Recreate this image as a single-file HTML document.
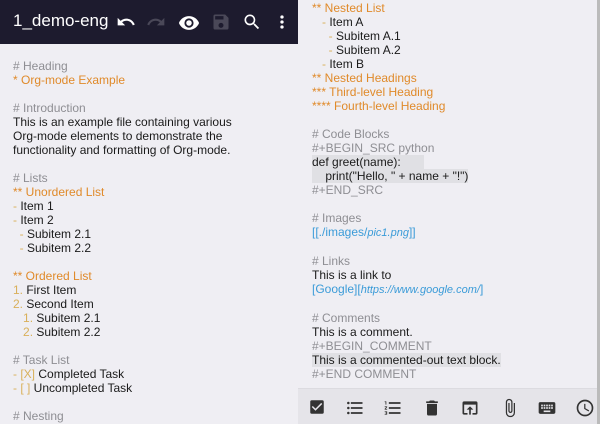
<!DOCTYPE html>
<html><head><meta charset="utf-8"><style>
*{margin:0;padding:0;box-sizing:border-box}
body{width:600px;height:424px;overflow:hidden;background:#efeef3;font-family:"Liberation Sans",sans-serif;font-size:12px;color:#1a1a1a;position:relative}
.bar{position:absolute;left:0;top:0;width:298px;height:44px;background:#1d1b2e}
.title{position:absolute;left:13px;top:11px;color:#fff;font-size:17px}
.ic{position:absolute;top:12px}
.pane{position:absolute;line-height:14px;white-space:pre}
.g{color:#8e8e93}.o{color:#e08a2a}.b{color:#3a9bd8}.y{color:#d9b05a}
.hl{background:#e0e0e4}
.tb{position:absolute;left:298px;top:388px;width:299px;height:36px;background:#e5e4e9;border-top:1px solid #dcdbe0}
.edge{position:absolute;left:597px;top:0;width:3px;height:424px;background:#bbb}
.tb svg{position:absolute;top:9px}
</style></head><body>
<div class="bar">
<div class="title">1_demo-eng</div>
<svg class="ic" style="left:116px" width="20" height="20" viewBox="0 0 24 24"><path fill="#fff" d="M12.5 8c-2.65 0-5.05 1-6.9 2.6L2 7v9h9l-3.62-3.62C8.77 11.2 10.54 10.5 12.5 10.5c3.54 0 6.55 2.31 7.6 5.5l2.37-.78C21.08 11.03 17.15 8 12.5 8z"/></svg>
<svg class="ic" style="left:146px" width="20" height="20" viewBox="0 0 24 24"><path fill="#4a4858" d="M18.4 10.6C16.55 9 14.15 8 11.5 8c-4.65 0-8.58 3.03-9.96 7.22L3.9 16c1.05-3.19 4.05-5.5 7.6-5.5 1.95 0 3.73.72 5.12 1.88L13 16h9V7l-3.6 3.6z"/></svg>
<svg class="ic" style="left:178px" width="22" height="22" viewBox="0 0 24 24"><path fill="#fff" d="M12 4.5C7 4.5 2.73 7.61 1 12c1.73 4.39 6 7.5 11 7.5s9.27-3.11 11-7.5c-1.73-4.39-6-7.5-11-7.5zM12 17a5 5 0 1 1 0-10 5 5 0 0 1 0 10zm0-8a3 3 0 1 0 0 6 3 3 0 0 0 0-6z"/></svg>
<svg class="ic" style="left:211px" width="20" height="20" viewBox="0 0 24 24"><path fill="#4a4858" d="M17 3H5a2 2 0 0 0-2 2v14a2 2 0 0 0 2 2h14a2 2 0 0 0 2-2V7l-4-4zm-5 16a3 3 0 1 1 0-6 3 3 0 0 1 0 6zm3-10H5V5h10v4z"/></svg>
<svg class="ic" style="left:242px" width="20" height="20" viewBox="0 0 24 24"><path fill="#fff" d="M15.5 14h-.79l-.28-.27A6.47 6.47 0 0 0 16 9.5 6.5 6.5 0 1 0 9.5 16c1.61 0 3.09-.59 4.23-1.57l.27.28v.79l5 4.99L20.49 19l-4.99-5zm-6 0C7.01 14 5 11.99 5 9.5S7.01 5 9.5 5 14 7.01 14 9.5 11.99 14 9.5 14z"/></svg>
<svg class="ic" style="left:272px" width="20" height="20" viewBox="0 0 24 24"><path fill="#fff" d="M12 8a2 2 0 1 0 0-4 2 2 0 0 0 0 4zm0 2a2 2 0 1 0 0 4 2 2 0 0 0 0-4zm0 6a2 2 0 1 0 0 4 2 2 0 0 0 0-4z"/></svg>
</div>
<div class="pane" style="left:13px;top:59px"><span class="g"># Heading</span>
<span class="o">* Org-mode Example</span>

<span class="g"># Introduction</span>
This is an example file containing various
Org-mode elements to demonstrate the
functionality and formatting of Org-mode.

<span class="g"># Lists</span>
<span class="o">** Unordered List</span>
<span class="y">-</span> Item 1
<span class="y">-</span> Item 2
  <span class="y">-</span> Subitem 2.1
  <span class="y">-</span> Subitem 2.2

<span class="o">** Ordered List</span>
<span class="y">1.</span> First Item
<span class="y">2.</span> Second Item
   <span class="y">1.</span> Subitem 2.1
   <span class="y">2.</span> Subitem 2.2

<span class="g"># Task List</span>
<span class="y">- [X]</span> Completed Task
<span class="y">- [ ]</span> Uncompleted Task

<span class="g"># Nesting</span></div>
<div class="pane" style="left:312px;top:1px"><span class="o">** Nested List</span>
   <span class="y">-</span> Item A
     <span class="y">-</span> Subitem A.1
     <span class="y">-</span> Subitem A.2
   <span class="y">-</span> Item B
<span class="o">** Nested Headings</span>
<span class="o">*** Third-level Heading</span>
<span class="o">**** Fourth-level Heading</span>

<span class="g"># Code Blocks</span>
<span class="g">#+BEGIN_SRC python</span>
<span class="hl">def greet(name):       </span>
<span class="hl">    print("Hello, " + name + "!")</span>
<span class="g">#+END_SRC</span>

<span class="g"># Images</span>
<span class="b">[[./images/<i style="font-size:11px">pic1.png</i>]]</span>

<span class="g"># Links</span>
This is a link to
<span class="b">[Google][<i style="font-size:11px">https://www.google.com/</i>]</span>

<span class="g"># Comments</span>
This is a comment.
<span class="g">#+BEGIN_COMMENT</span>
<span class="hl">This is a commented-out text block.</span>
<span class="g">#+END COMMENT</span></div>
<div class="tb">
<svg style="left:10px" width="18" height="18" viewBox="0 0 24 24"><path fill="#333" d="M19 3H5a2 2 0 0 0-2 2v14a2 2 0 0 0 2 2h14a2 2 0 0 0 2-2V5a2 2 0 0 0-2-2zm-9 14l-5-5 1.41-1.41L10 14.17l7.59-7.59L19 8l-9 9z"/></svg>
<svg style="left:47px" width="20" height="20" viewBox="0 0 24 24"><path fill="#333" d="M4 10.5a1.5 1.5 0 1 0 0 3 1.5 1.5 0 0 0 0-3zm0-6a1.5 1.5 0 1 0 0 3 1.5 1.5 0 0 0 0-3zm0 12a1.5 1.5 0 1 0 0 3 1.5 1.5 0 0 0 0-3zM7 19h14v-2H7v2zm0-6h14v-2H7v2zm0-8v2h14V5H7z"/></svg>
<svg style="left:85px" width="20" height="20" viewBox="0 0 24 24"><path fill="#333" d="M2 17h2v.5H3v1h1v.5H2v1h3v-4H2v1zm1-9h1V4H2v1h1v3zm-1 3h1.8L2 13.1v.9h3v-1H3.2L5 10.9V10H2v1zm5-6v2h14V5H7zm0 14h14v-2H7v2zm0-6h14v-2H7v2z"/></svg>
<svg style="left:124px" width="20" height="20" viewBox="0 0 24 24"><path fill="#333" d="M6 19a2 2 0 0 0 2 2h8a2 2 0 0 0 2-2V7H6v12zM19 4h-3.5l-1-1h-5l-1 1H5v2h14V4z"/></svg>
<svg style="left:162px" width="20" height="20" viewBox="0 0 24 24"><path fill="#333" d="M19 4H5a2 2 0 0 0-2 2v12a2 2 0 0 0 2 2h4v-2H5V8h14v10h-4v2h4a2 2 0 0 0 2-2V6a2 2 0 0 0-2-2zm-7 6l-4 4h3v6h2v-6h3l-4-4z"/></svg>
<svg style="left:202px" width="20" height="20" viewBox="0 0 24 24"><path fill="#333" d="M16.5 6v11.5a4 4 0 0 1-8 0V5a2.5 2.5 0 0 1 5 0v10.5a1 1 0 0 1-2 0V6H10v9.5a2.5 2.5 0 0 0 5 0V5a4 4 0 0 0-8 0v12.5a5.5 5.5 0 0 0 11 0V6h-1.5z"/></svg>
<svg style="left:239px" width="20" height="20" viewBox="0 0 24 24"><path fill="#333" d="M20 5H4a2 2 0 0 0-2 2v10a2 2 0 0 0 2 2h16a2 2 0 0 0 2-2V7a2 2 0 0 0-2-2zm-9 3h2v2h-2V8zm0 3h2v2h-2v-2zM8 8h2v2H8V8zm0 3h2v2H8v-2zm-1 2H5v-2h2v2zm0-3H5V8h2v2zm9 7H8v-2h8v2zm0-4h-2v-2h2v2zm0-3h-2V8h2v2zm3 3h-2v-2h2v2zm0-3h-2V8h2v2z"/></svg>
<svg style="left:277px" width="20" height="20" viewBox="0 0 24 24"><path fill="#333" d="M12 2a10 10 0 1 0 0 20 10 10 0 0 0 0-20zm0 18a8 8 0 1 1 0-16 8 8 0 0 1 0 16zm.5-13H11v6l5.25 3.15.75-1.23-4.5-2.67V7z"/></svg>
</div>
<div class="edge"></div>
</body></html>
